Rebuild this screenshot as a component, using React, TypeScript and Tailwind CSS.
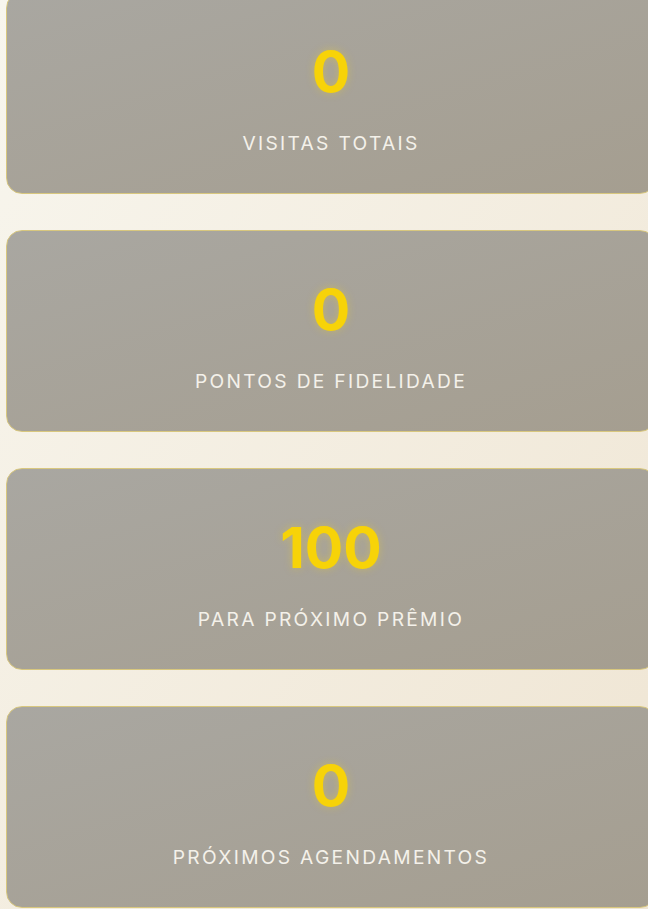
const stats = [
  { value: "0", label: "Visitas Totais" },
  { value: "0", label: "Pontos de Fidelidade" },
  { value: "100", label: "Para Próximo Prêmio" },
  { value: "0", label: "Próximos Agendamentos" },
];

const StatCard = ({ value, label }: { value: string; label: string }) => {
  return (
    <div className="w-[650px] shrink-0 rounded-2xl border border-[#d8c77e] bg-gradient-to-br from-[#a9a7a1] to-[#a59e90] pt-[50px] pb-[36px] flex flex-col items-center">
      <div className="h-[56px] text-[57px] leading-none font-bold text-[#f7d308] [text-shadow:0_0_8px_rgba(250,215,20,0.35)]">
        {value}
      </div>
      <div className="mt-[30px] h-[28px] text-[19.2px] leading-[28px] uppercase tracking-[0.12em] text-[#f4f1ea]">
        {label}
      </div>
    </div>
  );
};

export default function App() {
  return (
    <div className="w-[648px] h-[909px] overflow-hidden bg-gradient-to-br from-[#f8f6ee] to-[#efe5d3] font-['Inter','Noto_Sans',sans-serif]">
      <div className="-mt-[8px] pl-[6px] flex flex-col gap-9">
        {stats.map((s) => (
          <StatCard key={s.label} value={s.value} label={s.label} />
        ))}
      </div>
    </div>
  );
}
